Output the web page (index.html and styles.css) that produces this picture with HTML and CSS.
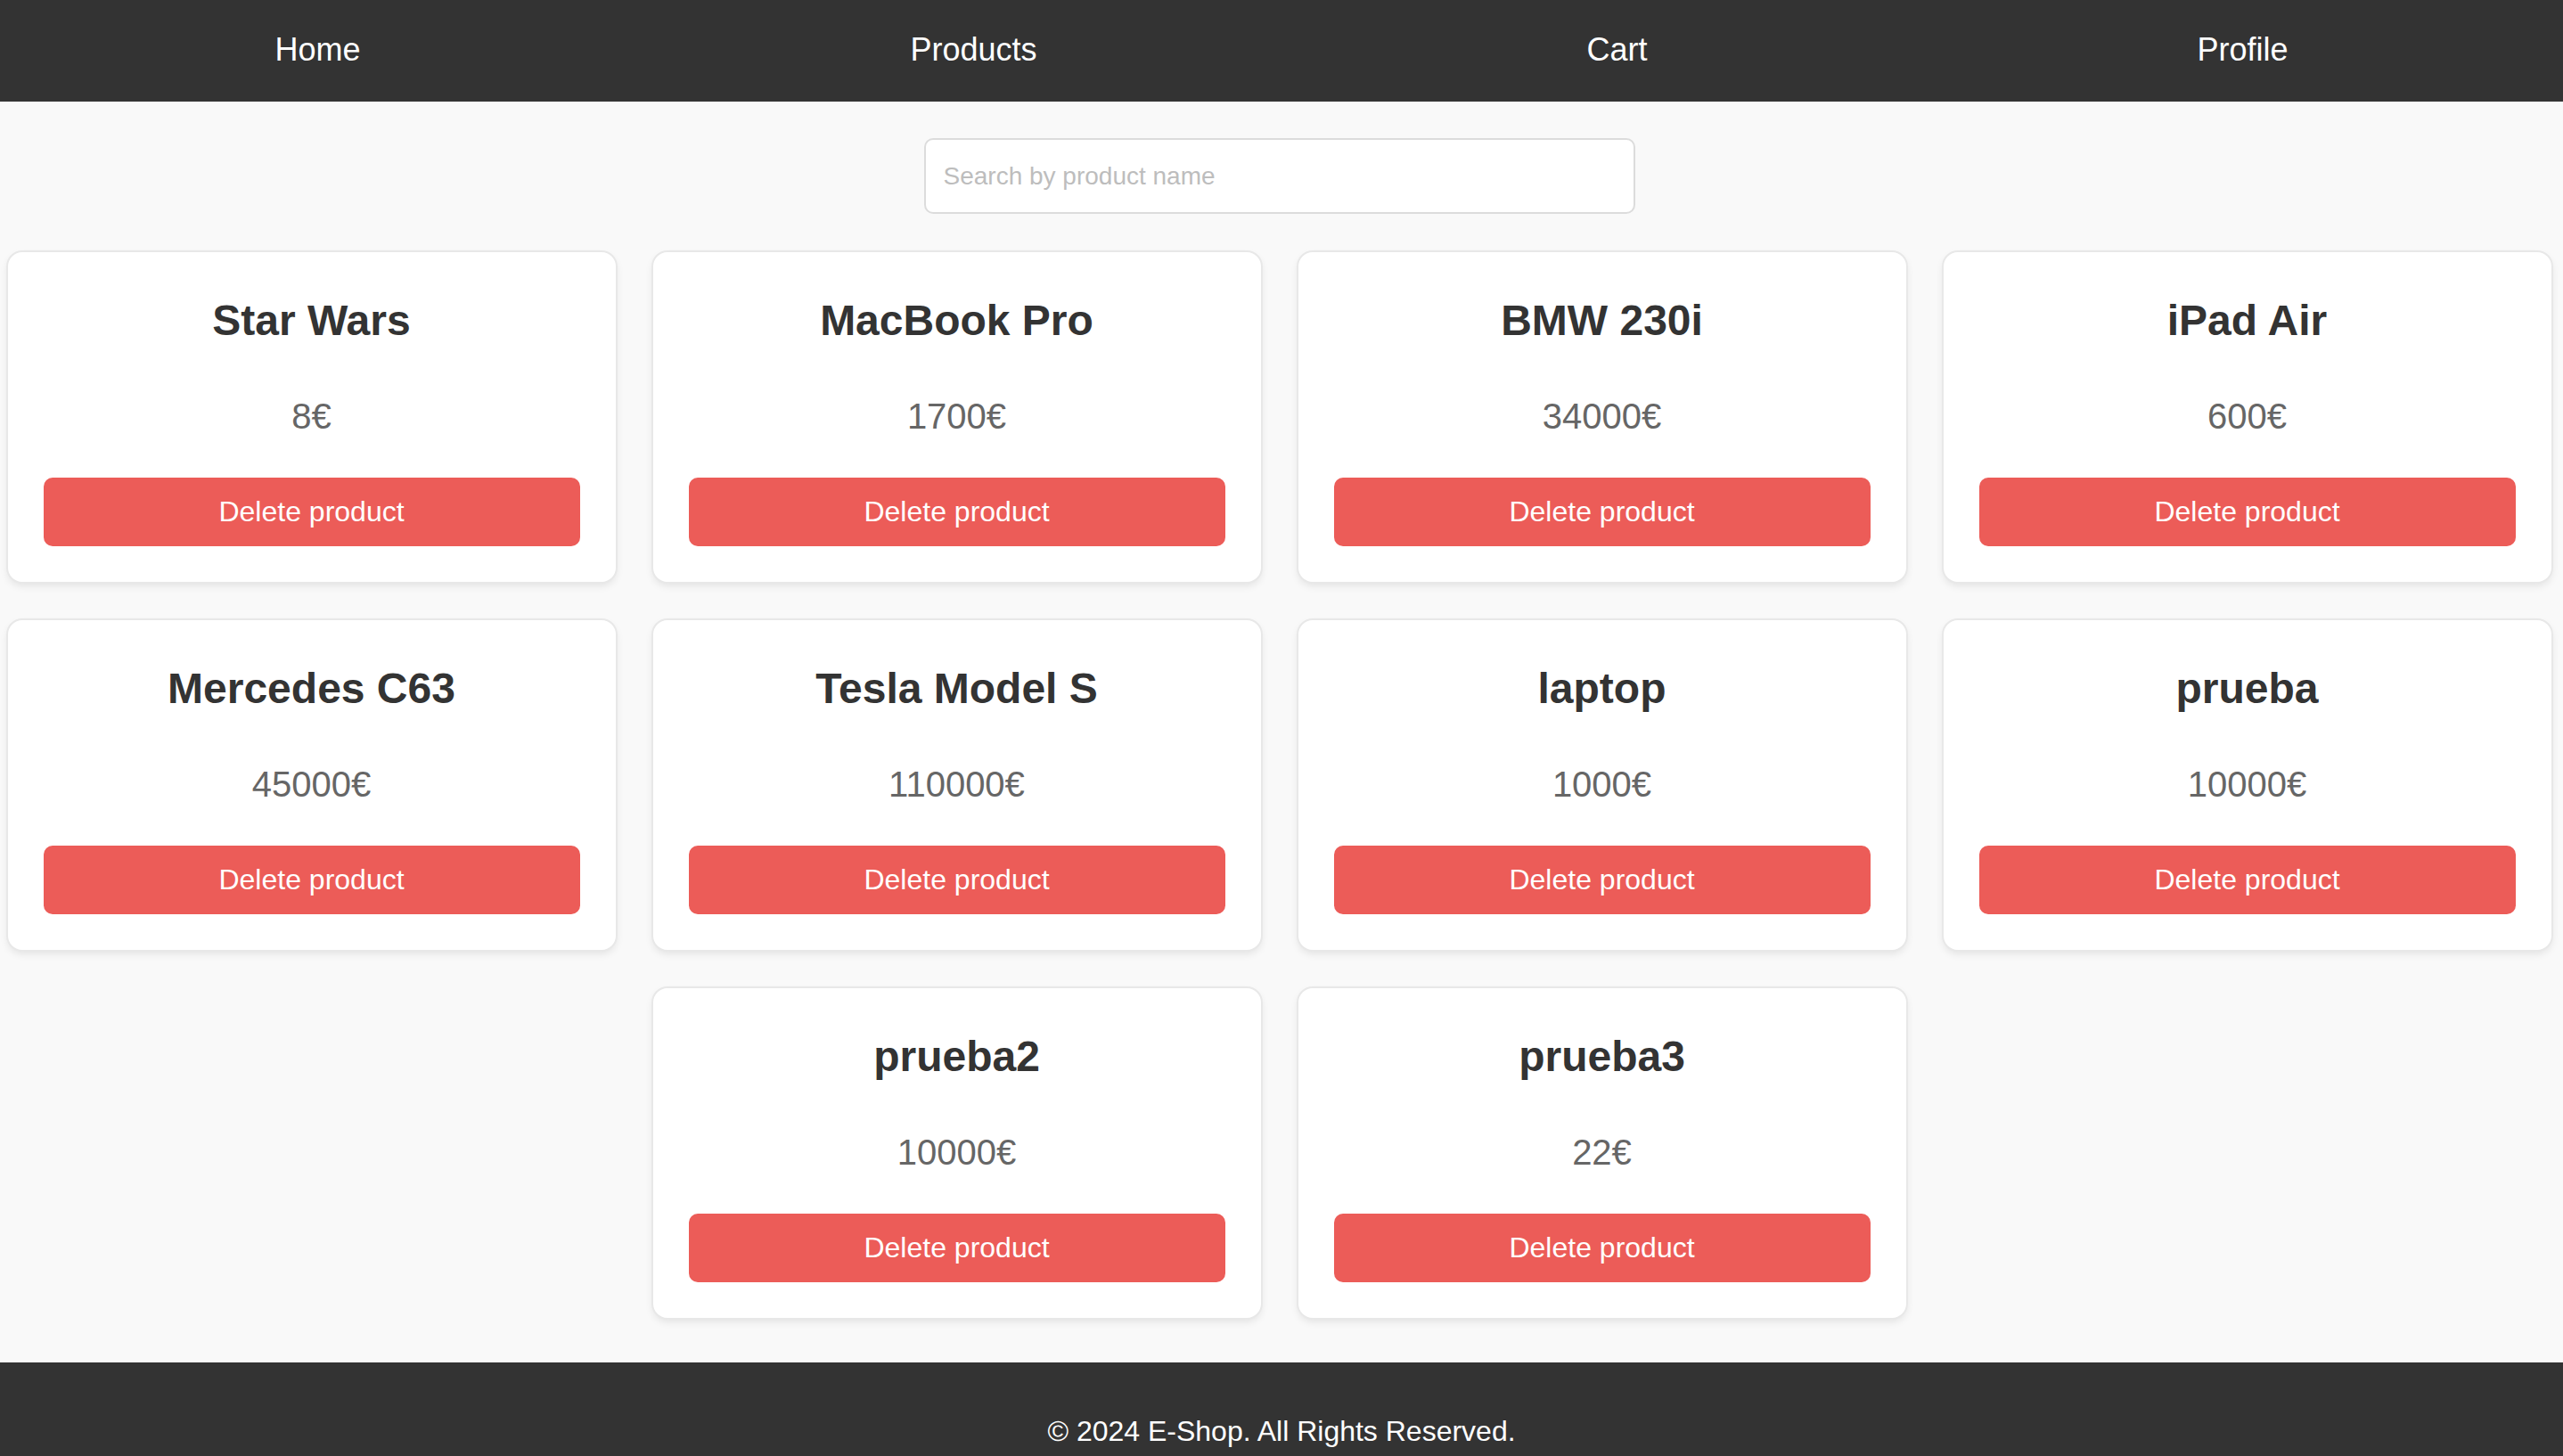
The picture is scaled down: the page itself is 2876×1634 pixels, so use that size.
FILE: index.html
```html
<!DOCTYPE html>
<html lang="en">
<head>
<meta charset="utf-8">
<title>E-Shop</title>
<link rel="stylesheet" href="styles.css">
</head>
<body>
<nav class="nav">
  <a class="nav-link" href="#">Home</a>
  <a class="nav-link" href="#">Products</a>
  <a class="nav-link" href="#">Cart</a>
  <a class="nav-link" href="#">Profile</a>
</nav>
<main class="main">
  <div class="search-wrap">
    <input class="search" type="text" placeholder="Search by product name">
  </div>
  <div class="products">
    <div class="card"><h2 class="card-title">Star Wars</h2><p class="card-price">8€</p><button class="btn-delete">Delete product</button></div>
    <div class="card"><h2 class="card-title">MacBook Pro</h2><p class="card-price">1700€</p><button class="btn-delete">Delete product</button></div>
    <div class="card"><h2 class="card-title">BMW 230i</h2><p class="card-price">34000€</p><button class="btn-delete">Delete product</button></div>
    <div class="card"><h2 class="card-title">iPad Air</h2><p class="card-price">600€</p><button class="btn-delete">Delete product</button></div>
    <div class="card"><h2 class="card-title">Mercedes C63</h2><p class="card-price">45000€</p><button class="btn-delete">Delete product</button></div>
    <div class="card"><h2 class="card-title">Tesla Model S</h2><p class="card-price">110000€</p><button class="btn-delete">Delete product</button></div>
    <div class="card"><h2 class="card-title">laptop</h2><p class="card-price">1000€</p><button class="btn-delete">Delete product</button></div>
    <div class="card"><h2 class="card-title">prueba</h2><p class="card-price">10000€</p><button class="btn-delete">Delete product</button></div>
    <div class="card"><h2 class="card-title">prueba2</h2><p class="card-price">10000€</p><button class="btn-delete">Delete product</button></div>
    <div class="card"><h2 class="card-title">prueba3</h2><p class="card-price">22€</p><button class="btn-delete">Delete product</button></div>
  </div>
</main>
<footer class="footer">
  <p class="footer-text">© 2024 E-Shop. All Rights Reserved.</p>
</footer>
</body>
</html>
```
FILE: styles.css
```css
* { box-sizing: border-box; }

body {
  margin: 0;
  background: #f9f9f9;
  font-family: "Liberation Sans", Arial, sans-serif;
  color: #333;
}

.nav {
  height: 114px;
  background: #333;
  display: flex;
  justify-content: space-around;
  align-items: center;
}

.nav-link {
  color: #fff;
  text-decoration: none;
  font-size: 36px;
  line-height: 42px;
  margin-top: -2px;
}

.main {
  padding-right: 5px;
}

.search-wrap {
  display: flex;
  justify-content: center;
  padding: 41px 0 43px;
}

.search {
  width: 798px;
  height: 85px;
  padding: 0 20px;
  border: 2px solid #dcdcdc;
  border-radius: 10px;
  background: #fff;
  font-family: "Liberation Sans", Arial, sans-serif;
  font-size: 28px;
  color: #333;
  outline: none;
}

.search::placeholder { color: #bdbdbd; }

.products {
  display: flex;
  flex-wrap: wrap;
  justify-content: center;
  gap: 43px 42px;
  padding-bottom: 50px;
}

.card {
  width: 682px;
  padding: 40px;
  background: #fff;
  border-radius: 16px;
  box-shadow: 0 0 0 2px #e8e8e8, 0 4px 10px rgba(0, 0, 0, 0.10);
  text-align: center;
}

.card-title {
  margin: 9px 0 0;
  font-size: 48px;
  line-height: 55px;
  font-weight: bold;
  color: #333;
}

.card-price {
  margin: 57px 0 0;
  font-size: 40px;
  line-height: 46px;
  color: #666;
}

.btn-delete {
  display: block;
  width: 100%;
  height: 77px;
  margin-top: 46px;
  border: none;
  border-radius: 10px;
  background: #ec5c58;
  color: #fff;
  font-family: "Liberation Sans", Arial, sans-serif;
  font-size: 32px;
  cursor: pointer;
}

.footer {
  background: #333;
  color: #fff;
  text-align: center;
  padding: 59px 0 38px;
}

.footer-text {
  margin: 0;
  font-size: 32px;
  line-height: 37px;
}
```
